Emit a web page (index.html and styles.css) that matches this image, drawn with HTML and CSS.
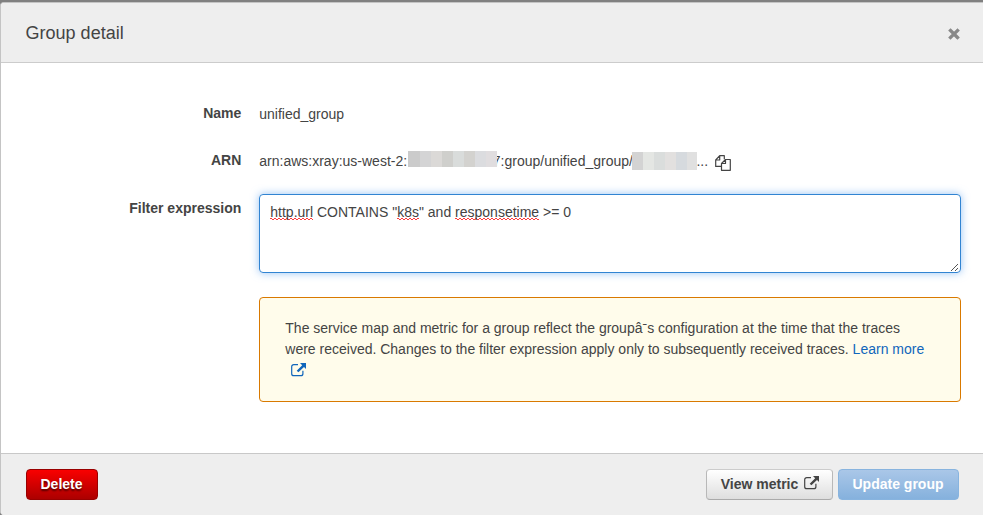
FILE: index.html
```html
<!DOCTYPE html>
<html lang="en">
<head>
<meta charset="utf-8">
<title>Group detail</title>
<link rel="stylesheet" href="styles.css">
</head>
<body>
<svg class="symbols" aria-hidden="true">
  <symbol id="external" viewBox="0 0 15 14">
    <path d="M7 1.700H2.700a2 2 0 0 0-2 2v7a2 2 0 0 0 2 2h7.200a2 2 0 0 0 2-2V7.800" fill="none" stroke="currentColor" stroke-width="1.200"/>
    <path d="M9 0h6v6l-2-2-5.600 5.300-1.700-1.600L11.200 2.200z" fill="currentColor"/>
  </symbol>
</svg>
<main class="dialog">
  <header class="header">
    <h1 class="title">Group detail</h1>
    <button class="close" aria-label="Close"><svg width="12" height="12" viewBox="0 0 12 12"><path d="M2.500 2.500l7 7M9.500 2.500l-7 7" stroke="currentColor" stroke-width="3.300" stroke-linecap="square"/></svg></button>
  </header>
  <section class="form">
    <div class="label">Name</div>
    <div class="value">unified_group</div>
    <div class="label label-arn">ARN</div>
    <div class="value arn">
      <span>arn:aws:xray:us-west-2:</span><span class="mask mask-account"></span><span>7:group/unified_group/</span><span class="mask mask-id"></span><span class="dots">...</span>
      <svg class="copy" width="16" height="16" viewBox="0 0 16 16" fill="none" stroke="currentColor" stroke-width="1.200" stroke-linejoin="round"><path d="M6 11.400H.7V5L4.700.7h4.600v3.600M4.700.7V5H.7"/><path d="M10.500 4.500h4.800v10.800H6.500V8.500zM10.500 4.500v4h-4"/></svg>
    </div>
    <div class="label label-filter">Filter expression</div>
    <div class="expression" role="textbox"><span class="typo">http.url</span> CONTAINS "<span class="typo">k8s</span>" and <span class="typo">responsetime</span> &gt;= 0
      <svg class="grip" width="9" height="9" viewBox="0 0 9 9" stroke="#555"><path d="M1 8L8 1M5 8l3-3"/></svg>
    </div>
    <div class="notice">The service map and metric for a group reflect the groupâ<span class="mark">ˉ</span>s configuration at the time that the traces<br>were received. Changes to the filter expression apply only to subsequently received traces. <a class="link">Learn more<br><svg class="link-icon" width="15" height="14"><use href="#external"/></svg></a></div>
  </section>
  <footer class="footer">
    <button class="btn delete">Delete</button>
    <div class="actions">
      <button class="btn view">View metric<svg width="15" height="14"><use href="#external"/></svg></button>
      <button class="btn update" disabled>Update group</button>
    </div>
  </footer>
</main>
</body>
</html>
```
FILE: styles.css
```css
* { box-sizing: border-box; }
body {
  margin: 0;
  padding-top: 2px;
  height: 515px;
  overflow: hidden;
  background: #808080;
  color: #444;
  font: 14px/21px "Liberation Sans", Arial, sans-serif;
}
.symbols { display: none; }
.dialog {
  display: flex;
  flex-direction: column;
  height: 513px;
  background: #fff;
  border: 1px solid #c4c4c4;
  border-width: 1px 0 0 1px;
  border-radius: 4px 0 0 4px;
  overflow: hidden;
}
.header {
  display: flex;
  align-items: center;
  justify-content: space-between;
  height: 60px;
  padding: 0 23px 0 24.6px;
  background: #eee;
  border-bottom: 1px solid #ccc;
}
.title { margin: 0; font-size: 18px; font-weight: 400; line-height: 24px; }
.close { display: flex; margin-top: 3px; padding: 0; border: 0; background: none; color: #888; }
.form {
  display: grid;
  grid-template-columns: 240px 702px;
  grid-template-rows: 47px 44px 103px 105px;
  column-gap: 18px;
  padding-top: 40px;
  flex: 1;
}
.label { margin-right: -0.3px; font-weight: 700; text-align: right; }
.value { padding: 1px 0 0 .3px; }
.arn { display: flex; height: 22px; white-space: nowrap; }
.mask { position: relative; flex: none; }
.mask-account {
  width: 89px;
  height: 16px;
  margin: 0 -4px 0 .7px;
  background: linear-gradient(90deg, #cbcbcb 0 12px, #d4d4d5 12px 23px, #dbd9d7 23px 34px, #cfcfcc 34px 45px, #d9dcdb 45px 56px, #d3d2cf 56px 67px, #dbdcdf 67px 78px, #e0dddf 78px);
}
.mask-id {
  width: 65px;
  height: 18px;
  margin: 1px 0 0 -.5px;
  background: linear-gradient(90deg, #d3d3d3 0 11px, #e4e6e3 11px 22px, #dadddc 22px 33px, #e2e0df 33px 44px, #d6dade 44px 55px, #e0e0e0 55px);
}
.dots { margin: 0 1px 0 -1px; }
.copy { margin: 4px 0 0 6px; }
.label-filter { padding-top: 4px; }
.expression {
  position: relative;
  height: 79px;
  padding: 7px 10px 7px 10.3px;
  border: 1px solid #3184d2;
  border-radius: 4px;
  box-shadow: 0 0 9px rgba(82, 155, 236, .6);
}
.typo {
  display: inline-block;
  background:
    repeating-linear-gradient(90deg, #ff3b3b 0 2px, transparent 2px 4px) 0 16px / 100% 1px no-repeat,
    repeating-linear-gradient(90deg, transparent 0 2px, #ff3b3b 2px 4px) 0 17px / 100% 1px no-repeat;
}
.grip { position: absolute; right: 1px; bottom: 0; }
.notice {
  grid-column: 2;
  padding: 20px 25px 20px 25.3px;
  background: #fffceb;
  border: 1px solid #d97900;
  border-radius: 4px;
  white-space: nowrap;
}
.mark { display: inline-block; transform: translateY(1px); }
.link { color: #1166bb; }
.link-icon { margin-left: 6px; vertical-align: -2px; }
.footer {
  display: flex;
  justify-content: space-between;
  height: 62px;
  padding: 15px 24px 0 25px;
  background: #eee;
  border-top: 1px solid #c8c8c8;
}
.actions { display: flex; gap: 5px; }
.btn {
  display: flex;
  align-items: center;
  justify-content: center;
  height: 31px;
  padding: 0;
  border: 1px solid;
  border-radius: 4px;
  font: 700 14px/21px "Liberation Sans", Arial, sans-serif;
}
.delete {
  width: 72px;
  padding-right: 1px;
  color: #fff;
  background: linear-gradient(#f90000, #ac0000);
  border-color: #990000;
  text-shadow: 0 2px 2px rgba(0, 0, 0, .6);
}
.view {
  width: 127px;
  gap: 6px;
  padding-left: 1px;
  color: #444;
  background: linear-gradient(#fff, #dedede);
  border-color: #ccc #b8b8b8 #aaa;
}
.view svg { margin-top: -4px; }
.update {
  width: 121px;
  padding-right: 1px;
  color: #fff;
  background: linear-gradient(#aac7e8, #85b1dd);
  border-color: #88b4df;
}
```
